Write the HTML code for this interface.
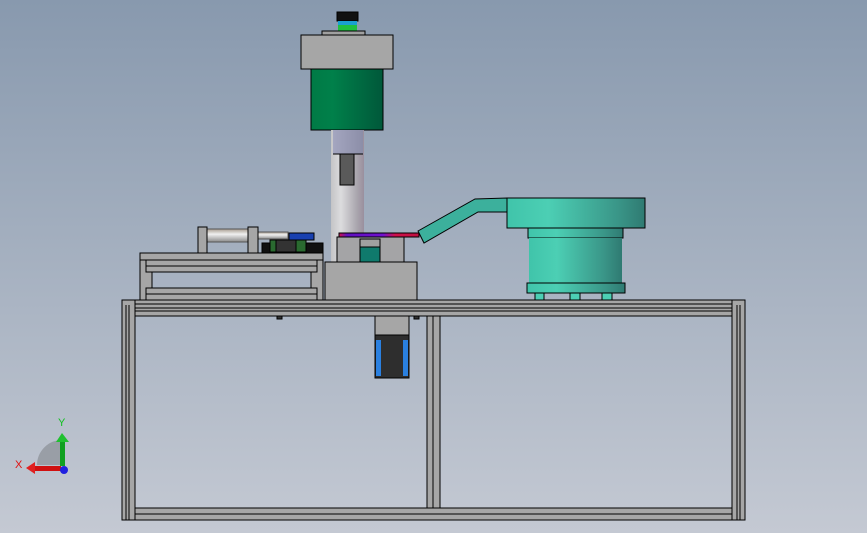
<!DOCTYPE html>
<html><head><meta charset="utf-8"><style>html,body{margin:0;padding:0;width:867px;height:533px;overflow:hidden}svg{display:block}</style></head><body>
<svg width="867" height="533" viewBox="0 0 867 533" xmlns="http://www.w3.org/2000/svg">
<defs>
<linearGradient id="bg" x1="0" y1="0" x2="0" y2="1"><stop offset="0" stop-color="#8899ae"/><stop offset="1" stop-color="#c4c9d3"/></linearGradient>
<linearGradient id="col" x1="0" x2="1"><stop offset="0" stop-color="#c4c4c6"/><stop offset=".3" stop-color="#dcdcde"/><stop offset=".8" stop-color="#a8a4ac"/><stop offset="1" stop-color="#9a8f9e"/></linearGradient>
<linearGradient id="grn" x1="0" x2="1"><stop offset="0" stop-color="#007a45"/><stop offset=".3" stop-color="#00804a"/><stop offset="1" stop-color="#00583a"/></linearGradient>
<linearGradient id="teal" x1="0" x2="1"><stop offset="0" stop-color="#40c4aa"/><stop offset=".3" stop-color="#4ccfb4"/><stop offset=".8" stop-color="#3a9688"/><stop offset="1" stop-color="#2f7a72"/></linearGradient>
<linearGradient id="rod" x1="0" y1="0" x2="0" y2="1"><stop offset="0" stop-color="#a89d90"/><stop offset=".4" stop-color="#f0f0f0"/><stop offset="1" stop-color="#8a8a8a"/></linearGradient>
<linearGradient id="lav" x1="0" x2="1"><stop offset="0" stop-color="#a4a6c0"/><stop offset="1" stop-color="#8c8ea8"/></linearGradient>
<linearGradient id="ring" x1="0" x2="1"><stop offset="0" stop-color="#d0104a"/><stop offset=".1" stop-color="#6010c0"/><stop offset=".55" stop-color="#7010d0"/><stop offset=".7" stop-color="#d0104a"/><stop offset="1" stop-color="#c01040"/></linearGradient>
</defs>
<rect width="867" height="533" fill="url(#bg)"/>
<g stroke="#000" stroke-width="1">
<!-- top column stuff -->
<rect x="337" y="12" width="21" height="9" fill="#111"/>
<rect x="338" y="21" width="19" height="4" fill="#1aa0d0" stroke="none"/>
<rect x="338" y="25" width="19" height="6" fill="#20c040" stroke="none"/>
<rect x="322" y="31" width="43" height="4" fill="#a0a0a0"/>
<rect x="301" y="35" width="92" height="34" fill="#a6a6a6"/>
<rect x="311" y="69" width="72" height="61" fill="url(#grn)"/>
<rect x="331" y="130" width="33" height="133" fill="url(#col)" stroke="none"/>
<rect x="333" y="130" width="30" height="24" fill="url(#lav)" stroke="none"/>
<line x1="333" y1="154" x2="363" y2="154"/>
<rect x="340" y="154" width="14" height="31" fill="#5a5a5a"/>
<!-- left platform -->
<rect x="140" y="253" width="183" height="7" fill="#a6a6a6"/>
<rect x="140" y="260" width="12" height="40" fill="#a6a6a6"/>
<rect x="311" y="260" width="12" height="40" fill="#a6a6a6"/>
<rect x="146" y="260" width="171" height="12" fill="#a6a6a6"/>
<line x1="146" y1="266" x2="317" y2="266"/>
<rect x="146" y="288" width="171" height="12" fill="#a6a6a6"/>
<line x1="146" y1="294" x2="317" y2="294"/>
<rect x="207" y="229" width="41" height="13" fill="url(#rod)" stroke="#555"/>
<rect x="258" y="232" width="30" height="7" fill="url(#rod)" stroke="#555"/>
<rect x="198" y="227" width="9" height="26" fill="#a6a6a6"/>
<rect x="248" y="227" width="10" height="26" fill="#a6a6a6"/>
<rect x="289" y="233" width="25" height="7" fill="#1840b0"/>
<rect x="262" y="243" width="61" height="10" fill="#111"/>
<rect x="270" y="240" width="36" height="12" fill="#2a6a30"/>
<rect x="276" y="240" width="20" height="12" fill="#333"/>
<!-- center base -->
<rect x="337" y="237" width="67" height="26" fill="#a4a4a6"/>
<rect x="339" y="233" width="80" height="4" fill="url(#ring)"/>
<rect x="360" y="239" width="20" height="23" fill="#0f7a6c"/>
<rect x="360" y="239" width="20" height="8" fill="#a0a0a0"/>
<rect x="325" y="262" width="92" height="38" fill="#a6a6a6"/>
<!-- chute -->
<polygon points="418,231 475,199 507,198 507,212 478,212 424,243" fill="#3cb09c"/>
<!-- feeder -->
<rect x="507" y="198" width="138" height="30" fill="url(#teal)"/>
<rect x="528" y="228" width="95" height="10" fill="url(#teal)"/>
<rect x="529" y="238" width="93" height="45" fill="url(#teal)" stroke="none"/>
<rect x="527" y="283" width="98" height="10" fill="url(#teal)"/>
<rect x="535" y="293" width="9" height="7" fill="#4ccfb4"/>
<rect x="570" y="293" width="10" height="7" fill="#4ccfb4"/>
<rect x="602" y="293" width="10" height="7" fill="#4ccfb4"/>
<!-- frame -->
<rect x="122" y="300" width="623" height="16" fill="#a6a6a6"/>
<line x1="135" y1="304" x2="732" y2="304"/>
<line x1="135" y1="308" x2="732" y2="308"/>
<line x1="135" y1="311" x2="732" y2="311"/>
<rect x="122" y="300" width="13" height="220" fill="#a6a6a6"/>
<line x1="126" y1="305" x2="126" y2="520"/><line x1="129" y1="305" x2="129" y2="520"/>
<rect x="732" y="300" width="13" height="220" fill="#a6a6a6"/>
<line x1="737" y1="305" x2="737" y2="520"/><line x1="740" y1="305" x2="740" y2="520"/>
<rect x="427" y="316" width="13" height="192" fill="#a6a6a6"/>
<line x1="433" y1="316" x2="433" y2="508"/>
<rect x="135" y="508" width="597" height="12" fill="#a6a6a6"/>
<line x1="135" y1="514" x2="732" y2="514"/>
<!-- motor -->
<rect x="375" y="316" width="34" height="19" fill="#a6a6a6"/>
<rect x="375" y="335" width="34" height="43" fill="#2e2e2e"/>
<rect x="376" y="340" width="5" height="36" fill="#2a80e0" stroke="none"/>
<rect x="403" y="340" width="5" height="36" fill="#2a80e0" stroke="none"/>
<rect x="277" y="316" width="5" height="3" fill="#333"/>
<rect x="414" y="316" width="5" height="3" fill="#333"/>
</g>
<!-- axis -->
<path d="M62 465 L62 440 A25 25 0 0 0 37 465 Z" fill="#8a8e96" opacity=".7"/>
<rect x="60" y="440" width="5" height="26" fill="#10a020"/>
<polygon points="56,442 62,433 69,442" fill="#20c030"/>
<rect x="33" y="466" width="28" height="5" fill="#d01010"/>
<polygon points="35,462 26,468 35,474" fill="#e02020"/>
<circle cx="64" cy="470" r="4" fill="#2020e0"/>
<text x="58" y="426" font-family="Liberation Sans,sans-serif" font-size="11" fill="#10c020">Y</text>
<text x="15" y="468" font-family="Liberation Sans,sans-serif" font-size="11" fill="#e01010">X</text>
</svg>
</body></html>
